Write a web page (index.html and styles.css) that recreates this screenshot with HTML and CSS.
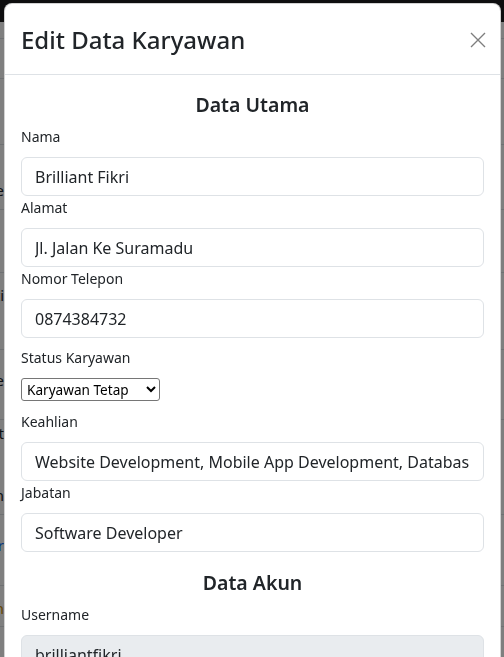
FILE: index.html
```html
<!DOCTYPE html>
<html lang="id">
<head>
<meta charset="utf-8">
<title>Edit Data Karyawan</title>
<link rel="stylesheet" href="styles.css">
</head>
<body>
<div class="page">
  <div class="navbar"></div>
  <div class="bg-row h17"></div>
  <div class="bg-row h40"></div>
  <div class="bg-row h66"></div>
  <div class="bg-row h65 pad45"><span class="frag">Nama Lengkape</span></div>
  <div class="bg-row h63"></div>
  <div class="bg-row h77 pad12"><span class="frag">Tetapti</span></div>
  <div class="bg-row h70 pad20"><span class="frag">Websitee</span></div>
  <div class="bg-row h95 stack"><span class="frag">Fikrit</span><span class="frag">Developern</span></div>
  <div class="bg-row h71 pad20"><span class="frag link">Detailr</span></div>
  <div class="bg-row h41 pad12"><span class="frag warn">Editn</span></div>
  <div class="bg-row h60"></div>
</div>
<div class="backdrop"></div>
<div class="modal">
  <div class="modal-header">
    <h4 class="modal-title">Edit Data Karyawan</h4>
    <button class="btn-close" type="button" aria-label="Close">
      <svg viewBox="0 0 16 16" width="16" height="16"><path d="M1 1 L15 15 M15 1 L1 15" stroke="currentColor" stroke-width="1.4" fill="none"/></svg>
    </button>
  </div>
  <div class="modal-body">
    <h5 class="section-title first">Data Utama</h5>
    <label class="form-label">Nama</label>
    <input class="form-control" type="text" value="Brilliant Fikri">
    <label class="form-label">Alamat</label>
    <input class="form-control" type="text" value="Jl. Jalan Ke Suramadu">
    <label class="form-label">Nomor Telepon</label>
    <input class="form-control" type="text" value="0874384732">
    <div class="select-group">
      <label class="form-label">Status Karyawan</label>
      <select class="status-select">
        <option>Karyawan Tetap</option>
        <option>Karyawan Kontrak</option>
      </select>
    </div>
    <label class="form-label">Keahlian</label>
    <input class="form-control" type="text" value="Website Development, Mobile App Development, Database Administration">
    <label class="form-label">Jabatan</label>
    <input class="form-control" type="text" value="Software Developer">
    <h5 class="section-title">Data Akun</h5>
    <label class="form-label">Username</label>
    <input class="form-control" type="text" value="brilliantfikri" disabled>
    <label class="form-label">Password</label>
    <input class="form-control" type="password" value="password">
  </div>
</div>
</body>
</html>
```

FILE: styles.css
```css
* { box-sizing: border-box; }
html, body {
  margin: 0;
  height: 100%;
  overflow: hidden;
}
body {
  font-family: "Noto Sans", "Open Sans", sans-serif;
  color: #212529;
  background: #fff;
}
.page {
  display: flex;
  flex-direction: column;
}
.navbar {
  height: 22px;
  background: #1c1d1f;
}
.bg-row {
  border-bottom: 1px solid #dee2e6;
  display: flex;
  flex-direction: column;
  width: 100%;
  overflow: hidden;
  font-size: 15px;
  line-height: 20px;
}
.bg-row .frag {
  width: 4px;
  display: flex;
  justify-content: flex-end;
  white-space: nowrap;
  overflow: hidden;
  color: #212529;
}
.frag.link { color: #0d6efd; }
.frag.warn { color: #c98a00; }
.h17 { height: 17px; }
.h40 { height: 40px; }
.h66 { height: 66px; }
.h65 { height: 65px; }
.h63 { height: 63px; }
.h77 { height: 77px; }
.h70 { height: 70px; }
.h95 { height: 95px; }
.h71 { height: 71px; }
.h41 { height: 41px; }
.h60 { height: 60px; }
.pad45 { padding-top: 35px; }
.pad12 { padding-top: 12px; }
.pad20 { padding-top: 20px; }
.stack { padding-top: 3px; gap: 42px; }

.backdrop {
  position: fixed;
  inset: 0;
  background: rgba(0, 0, 0, 0.5);
}

.modal {
  position: absolute;
  top: 3px;
  left: 4px;
  width: 497px;
  background: #fff;
  border: 1px solid rgba(0, 0, 0, 0.175);
  border-radius: 8px;
}
.modal-header {
  display: flex;
  align-items: center;
  justify-content: space-between;
  padding: 18px 14px 16px 16px;
  border-bottom: 1px solid #dee2e6;
}
.modal-title {
  margin: 0;
  font-size: 24px;
  font-weight: 500;
  line-height: 36px;
}
.btn-close {
  border: 0;
  background: transparent;
  padding: 0;
  margin: 0;
  width: 16px;
  height: 16px;
  color: #000;
  opacity: 0.5;
  display: flex;
}
.modal-body {
  padding: 18px 16px 16px;
  display: flex;
  flex-direction: column;
}
.section-title {
  margin: 19px 0 8px;
  font-size: 19.5px;
  font-weight: 600;
  line-height: 24px;
  text-align: center;
}
.section-title.first { margin-top: 0; }
.form-label {
  display: block;
  font-size: 14px;
  line-height: 24px;
  margin-bottom: 8px;
}
.form-control {
  display: block;
  width: 100%;
  height: 39px;
  padding: 0 13px;
  font-family: inherit;
  font-size: 16px;
  color: #212529;
  background: #fff;
  border: 1px solid #dee2e6;
  border-radius: 6px;
  outline: none;
}
.form-control:disabled {
  background: #e9ecef;
  opacity: 1;
}
.select-group {
  margin: 8px 0 9px;
  display: flex;
  flex-direction: column;
  align-items: flex-start;
}
.status-select {
  width: 139px;
  height: 23px;
  font-family: inherit;
  font-size: 13.6px;
  color: #000;
  border: 1px solid #767676;
  border-radius: 3px;
  background: #fff;
  padding: 0 1px;
}
```
